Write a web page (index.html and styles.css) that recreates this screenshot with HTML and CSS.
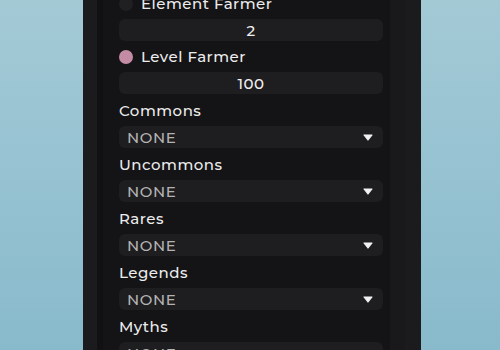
FILE: index.html
```html
<!DOCTYPE html>
<html>
<head>
<meta charset="utf-8">
<link rel="stylesheet" href="styles.css">
</head>
<body>
<div class="frame">
  <div class="inner">
    <div class="content">
      <div class="toggle"><span class="dot off"></span><span class="ttext">Element Farmer</span></div>
      <div class="box input">2</div>
      <div class="toggle"><span class="dot on"></span><span class="ttext">Level Farmer</span></div>
      <div class="box input">100</div>
      <div class="label">Commons</div>
      <div class="box dd"><span class="ddtext">NONE</span><svg class="arrow" width="10" height="7" viewBox="0 0 10 7"><path d="M1 1 H9 L5 6 Z" fill="#f2f2f2" stroke="#f2f2f2" stroke-width="1.2" stroke-linejoin="round"/></svg></div>
      <div class="label">Uncommons</div>
      <div class="box dd"><span class="ddtext">NONE</span><svg class="arrow" width="10" height="7" viewBox="0 0 10 7"><path d="M1 1 H9 L5 6 Z" fill="#f2f2f2" stroke="#f2f2f2" stroke-width="1.2" stroke-linejoin="round"/></svg></div>
      <div class="label">Rares</div>
      <div class="box dd"><span class="ddtext">NONE</span><svg class="arrow" width="10" height="7" viewBox="0 0 10 7"><path d="M1 1 H9 L5 6 Z" fill="#f2f2f2" stroke="#f2f2f2" stroke-width="1.2" stroke-linejoin="round"/></svg></div>
      <div class="label">Legends</div>
      <div class="box dd"><span class="ddtext">NONE</span><svg class="arrow" width="10" height="7" viewBox="0 0 10 7"><path d="M1 1 H9 L5 6 Z" fill="#f2f2f2" stroke="#f2f2f2" stroke-width="1.2" stroke-linejoin="round"/></svg></div>
      <div class="label">Myths</div>
      <div class="box dd"><span class="ddtext">NONE</span><svg class="arrow" width="10" height="7" viewBox="0 0 10 7"><path d="M1 1 H9 L5 6 Z" fill="#f2f2f2" stroke="#f2f2f2" stroke-width="1.2" stroke-linejoin="round"/></svg></div>
    </div>
    <div class="track"></div>
  </div>
</div>
</body>
</html>
```
FILE: styles.css
```css
html, body {
  margin: 0;
  padding: 0;
}
body {
  width: 500px;
  height: 350px;
  overflow: hidden;
  background: linear-gradient(180deg, #a3c9d5 0%, #96c2d1 50%, #88bacc 100%);
  font-family: "Montserrat", "Inter", "Noto Sans", sans-serif;
}
.frame {
  margin-left: 83px;
  width: 338px;
  height: 350px;
  background: #1b1a1d;
  box-sizing: border-box;
  padding: 0 16px 0 14px;
  display: flex;
}
.inner {
  flex: 1;
  display: flex;
  background: #141316;
  border-left: 6px solid #111013;
  overflow: hidden;
}
.content {
  flex: 1;
  padding: 0 7px 0 16px;
  margin-top: -12px;
  display: flex;
  flex-direction: column;
}
.track {
  width: 15px;
  background: #19181b;
}
.toggle {
  height: 31px;
  flex: none;
  display: flex;
  align-items: center;
  gap: 8px;
}
.dot {
  width: 14px;
  height: 14px;
  border-radius: 50%;
  flex: none;
}
.dot.off { background: #201f22; }
.dot.on { background: #c48ca4; }
.ttext, .label {
  color: #ececec;
  font-size: 15px;
  font-weight: 500;
  letter-spacing: 0.5px;
}
.label {
  height: 32px;
  flex: none;
  display: flex;
  align-items: center;
}
.box {
  height: 22px;
  border-radius: 6px;
  background: #1e1d20;
  flex: none;
}
.input {
  display: flex;
  align-items: center;
  justify-content: center;
  color: #efefef;
  font-size: 15px;
  font-weight: 500;
  letter-spacing: 0.5px;
}
.dd {
  display: flex;
  align-items: center;
  justify-content: space-between;
  padding: 0 10px 0 8px;
}
.ddtext {
  color: #b3b3b3;
  font-size: 15px;
  font-weight: 500;
  letter-spacing: 0.6px;
}
.arrow {
  display: block;
}
```
